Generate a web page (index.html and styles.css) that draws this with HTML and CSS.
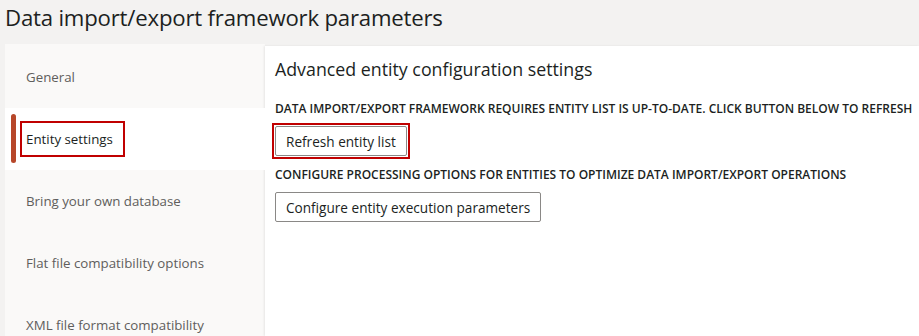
FILE: index.html
```html
<!DOCTYPE html>
<html>
<head>
    <title>Data import/export framework parameters</title>
    <link rel="stylesheet" href="styles.css">
</head>
<body>
    <h1 class="page-title">Data import/export framework parameters</h1>
    <div class="layout">
        <!-- Left tab list -->
        <div class="nav">
            <div class="nav-item">General</div>
            <div class="nav-item selected">
                <span class="accent"></span>
                <span class="focus-box">Entity settings</span>
            </div>
            <div class="nav-item">Bring your own database</div>
            <div class="nav-item">Flat file compatibility options</div>
            <div class="nav-item">XML file format compatibility</div>
        </div>

        <!-- Tab content -->
        <div class="content">
            <h2 class="section-title">Advanced entity configuration settings</h2>
            <div class="group">
                <div class="label">Data import/export framework requires entity list is up-to-date. Click button below to refresh</div>
                <div class="focus-ring"><button class="btn">Refresh entity list</button></div>
            </div>
            <div class="group">
                <div class="label">Configure processing options for entities to optimize data import/export operations</div>
                <button class="btn">Configure entity execution parameters</button>
            </div>
        </div>
    </div>
</body>
</html>
```

FILE: styles.css
```css
body {
    font-family: "Open Sans", "Noto Sans", sans-serif;
    background-color: #f3f2f1;
    color: #201f1e;
    margin: 0;
    height: 100vh;
    overflow: hidden;
}

.page-title {
    font-size: 22.2px;
    font-weight: 400;
    margin: 0;
    padding: 3px 0 0 5px;
    height: 41px;
    line-height: 30px;
    letter-spacing: -0.2px;
}

.layout {
    display: flex;
    margin-left: 5px;
    height: 292px;
}

.nav {
    width: 260px;
    flex-shrink: 0;
    background-color: #faf9f8;
    padding-top: 2px;
    overflow: hidden;
}

.nav-item {
    height: 62px;
    display: flex;
    align-items: center;
    padding-left: 21px;
    font-size: 13.3px;
    color: #605e5c;
    position: relative;
}

.nav-item.selected {
    background-color: #fff;
    color: #201f1e;
}

/* red bar on the active tab */
.accent {
    position: absolute;
    left: 6px;
    top: 6px;
    bottom: 7px;
    width: 5px;
    border-radius: 3px;
    background-color: #b7472a;
}

.focus-box {
    border: 2px solid #c00000;
    padding: 0 10px 0 4px;
    margin-left: -6px;
    height: 32px;
    display: flex;
    align-items: center;
}

.content {
    flex: 1;
    background-color: #fff;
    margin-top: 2px;
    padding: 10px 0 0 10px;
    box-shadow: -1px 0 2px rgba(0, 0, 0, 0.08);
}

.section-title {
    font-size: 17.8px;
    font-weight: 400;
    margin: 0 0 19px;
    line-height: 26px;
}

.label {
    font-size: 12px;
    font-weight: 600;
    text-transform: uppercase;
    white-space: nowrap;
    line-height: 16px;
    margin-bottom: 9px;
}

.group {
    margin-bottom: 8px;
}

.focus-ring {
    display: inline-block;
    border: 2px solid #c00000;
    padding: 1px;
    margin: -3px 0 0 -3px;
}

.btn {
    font-family: inherit;
    font-size: 13.6px;
    color: #201f1e;
    background-color: #fff;
    border: 1px solid #8a8886;
    border-radius: 2px;
    height: 30px;
    padding: 0 10px;
    cursor: pointer;
}
```
